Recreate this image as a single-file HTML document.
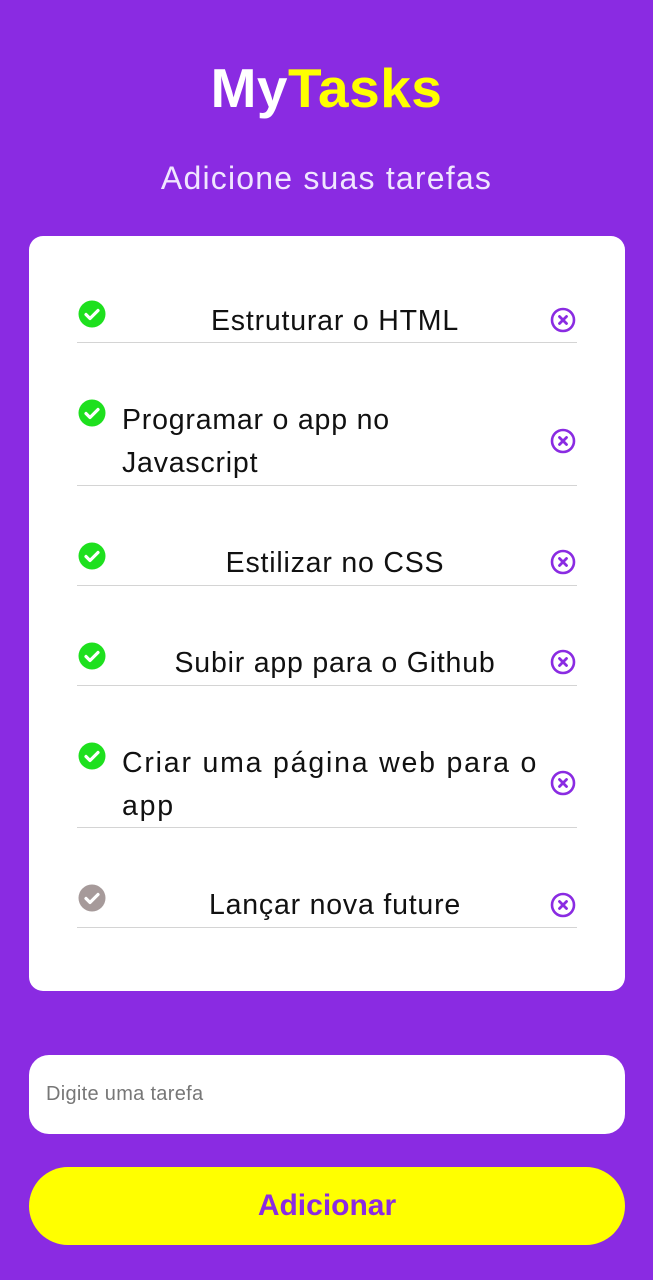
<!DOCTYPE html><html><head><meta charset="utf-8"><style>
body{margin:0;width:653px;height:1280px;background:#8a2be2;font-family:"Liberation Sans",sans-serif;position:relative;overflow:hidden}
.a{position:absolute}
h1{position:absolute;top:56px;left:0;width:653px;text-align:center;margin:0;font-size:55px;font-weight:bold;color:#fff;letter-spacing:0.5px}
h1 span{color:#ffff00}
.sub{top:160px;left:0;width:653px;text-align:center;font-size:32px;color:#f0e6ff;letter-spacing:1.2px}
.card{left:29px;top:236px;width:596px;height:755px;background:#fff;border-radius:14px}
.line{left:77px;width:500px;height:1px;background:#d4d4d4}
.t{font-size:28.5px;color:#111;line-height:43px;letter-spacing:0.8px;white-space:nowrap}
.c{left:120px;width:430px;text-align:center}
.l{left:122px;width:440px}
.ic{width:28px;height:28px}
.x{width:26px;height:26px}
.inp{left:29px;top:1055px;width:596px;height:79px;background:#fff;border-radius:20px}
.ph{left:46px;top:1083px;font-size:20px;color:#777;letter-spacing:0.3px}
.btn{left:29px;top:1167px;width:596px;height:78px;background:#ffff00;border-radius:40px;text-align:center;line-height:78px;font-size:30px;font-weight:bold;color:#8a2be2}
</style></head><body>
<h1>My<span>Tasks</span></h1>
<div class="a sub">Adicione suas tarefas</div>
<div class="a card"></div>
<svg width="0" height="0" style="position:absolute"><defs>
<symbol id="ck" viewBox="0 0 28 28"><circle cx="14" cy="14" r="13.5" fill="currentColor"/><path d="M8 14.5l4 4 8-8" stroke="#fff" stroke-width="3.2" fill="none" stroke-linecap="round" stroke-linejoin="round"/></symbol>
<symbol id="xx" viewBox="0 0 26 26"><circle cx="13" cy="13" r="11" fill="none" stroke="#8a2be2" stroke-width="2.6"/><path d="M9.5 9.5l7 7M16.5 9.5l-7 7" stroke="#8a2be2" stroke-width="2.8" stroke-linecap="round"/></symbol>
</defs></svg>

<svg class="a ic" style="left:78px;top:300px;color:#1ee01e"><use href="#ck"/></svg>
<div class="a t c" style="top:300px">Estruturar o HTML</div>
<svg class="a x" style="left:550px;top:307px"><use href="#xx"/></svg>
<div class="a line" style="top:342px"></div>

<svg class="a ic" style="left:78px;top:399px;color:#1ee01e"><use href="#ck"/></svg>
<div class="a t l" style="top:399px">Programar o app no<br>Javascript</div>
<svg class="a x" style="left:550px;top:428px"><use href="#xx"/></svg>
<div class="a line" style="top:485px"></div>

<svg class="a ic" style="left:78px;top:542px;color:#1ee01e"><use href="#ck"/></svg>
<div class="a t c" style="top:542px">Estilizar no CSS</div>
<svg class="a x" style="left:550px;top:549px"><use href="#xx"/></svg>
<div class="a line" style="top:585px"></div>

<svg class="a ic" style="left:78px;top:642px;color:#1ee01e"><use href="#ck"/></svg>
<div class="a t c" style="top:642px">Subir app para o Github</div>
<svg class="a x" style="left:550px;top:649px"><use href="#xx"/></svg>
<div class="a line" style="top:685px"></div>

<svg class="a ic" style="left:78px;top:742px;color:#1ee01e"><use href="#ck"/></svg>
<div class="a t l" style="top:742px;letter-spacing:1.8px">Criar uma página web para o<br>app</div>
<svg class="a x" style="left:550px;top:770px"><use href="#xx"/></svg>
<div class="a line" style="top:827px"></div>

<svg class="a ic" style="left:78px;top:884px;color:#a69a9a"><use href="#ck"/></svg>
<div class="a t c" style="top:884px">Lançar nova future</div>
<svg class="a x" style="left:550px;top:892px"><use href="#xx"/></svg>
<div class="a line" style="top:927px"></div>

<div class="a inp"></div>
<div class="a ph">Digite uma tarefa</div>
<div class="a btn">Adicionar</div>
</body></html>
